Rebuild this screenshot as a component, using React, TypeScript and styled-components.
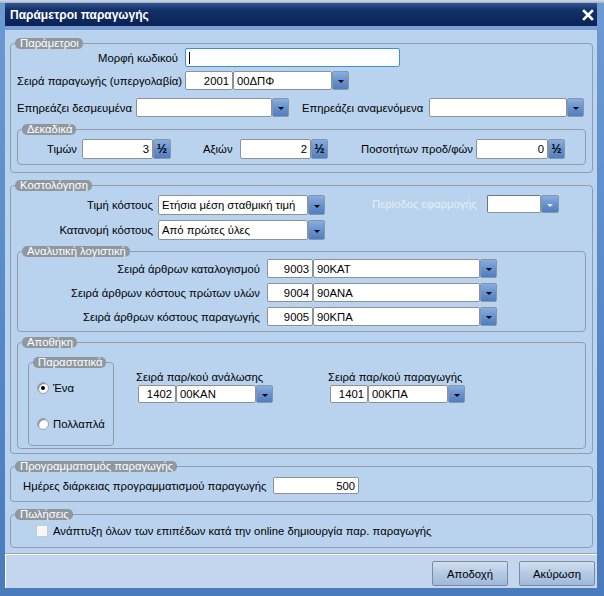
import styled, { createGlobalStyle } from 'styled-components'

const GlobalStyle = createGlobalStyle`
  html, body {
    margin: 0;
    padding: 0;
    background: #5b88c4;
  }
  body {
    font-family: "Liberation Sans", Arial, sans-serif;
    font-size: 11.3px;
    color: #000;
  }
`

const Window = styled.div`
  width: 604px;
  height: 596px;
  box-sizing: border-box;
  display: flex;
  flex-direction: column;
  padding: 0 7px 8px 5px;
  background: linear-gradient(180deg, #6d9ad3 0%, #5686c6 60%, #4a7bbd 100%);
`

const TopStrip = styled.div`
  height: 3px;
  margin: 0 -7px 0 -5px;
  background: linear-gradient(180deg, #d4dbe5, #9fb1c9);
`

const TitleBar = styled.div`
  height: 23px;
  display: flex;
  align-items: center;
  justify-content: space-between;
  padding: 0 3px 0 5px;
  background: linear-gradient(180deg, #33568e 0%, #13306a 30%, #0b2355 100%);
  color: #fff;
  font-size: 12px;
  font-weight: bold;
`

const TitleBand = styled.div`
  height: 4px;
  background: #7b9fd2;
`

const Body = styled.div`
  flex: 1;
  display: flex;
  flex-direction: column;
  gap: 7px;
  padding: 8px 4px 0 5px;
  background: #b9d3ee;
`

const Group = styled.fieldset<{ $mt?: number; $ml?: number; $w?: number }>`
  margin: ${p => p.$mt ?? 0}px 0 0 ${p => p.$ml ?? 0}px;
  padding: 0;
  ${p => (p.$w ? `width: ${p.$w}px; box-sizing: border-box; flex-shrink: 0;` : '')}
  border: 1px solid #8e9cad;
  border-radius: 4px;
  min-width: 0;
`

const Legend = styled.legend`
  margin-left: 4px;
  padding: 0 4px 0 5px;
  height: 11px;
  line-height: 11px;
  background: #8f989f;
  color: #fff;
  border-radius: 5px;
  white-space: nowrap;
`

const GroupBody = styled.div<{ $pad: string; $row?: boolean }>`
  display: flex;
  flex-direction: ${p => (p.$row ? 'row' : 'column')};
  align-items: flex-start;
  padding: ${p => p.$pad};
`

const Row = styled.div<{ $mt?: number; $ml?: number; $h?: number }>`
  display: flex;
  align-items: center;
  height: ${p => p.$h ?? 19}px;
  margin-top: ${p => p.$mt ?? 0}px;
  margin-left: ${p => p.$ml ?? 0}px;
`

const Label = styled.span<{ $w?: number; $right?: boolean; $ml?: number; $mr?: number; $off?: boolean }>`
  flex-shrink: 0;
  white-space: nowrap;
  ${p => (p.$w ? `width: ${p.$w}px;` : '')}
  text-align: ${p => (p.$right ? 'right' : 'left')};
  margin-left: ${p => p.$ml ?? 0}px;
  margin-right: ${p => p.$mr ?? 0}px;
  color: ${p => (p.$off ? '#e6edf5' : '#000')};
`

const Box = styled.div<{ $w: number; $h?: number; $right?: boolean; $focus?: boolean; $sunken?: boolean }>`
  box-sizing: border-box;
  flex-shrink: 0;
  width: ${p => p.$w}px;
  height: ${p => p.$h ?? 19}px;
  display: flex;
  align-items: center;
  justify-content: ${p => (p.$right ? 'flex-end' : 'flex-start')};
  padding: 0 3px;
  background: #fff;
  border: 1px solid ${p => (p.$focus ? '#3e8de4' : '#8b9299')};
  ${p => (p.$sunken ? 'border-top-color: #6c7580; border-left-color: #6c7580;' : '')}
  border-radius: 2px;
  white-space: nowrap;
  overflow: hidden;
`

const Caret = styled.span`
  width: 1px;
  height: 12px;
  background: #000;
`

const SideButton = styled.div<{ $w?: number; $h?: number }>`
  box-sizing: border-box;
  flex-shrink: 0;
  width: ${p => p.$w ?? 17}px;
  height: ${p => p.$h ?? 19}px;
  display: flex;
  align-items: center;
  justify-content: center;
  background: linear-gradient(180deg, #89aee0 0%, #6892cf 50%, #4f7fc0 100%);
  border: 1px solid #8a96a4;
  border-radius: 2px;
  font-size: 12px;
  font-weight: bold;
`

const Arrow = styled.span<{ $off?: boolean }>`
  width: 0;
  height: 0;
  margin-top: 2px;
  border-left: 3px solid transparent;
  border-right: 3px solid transparent;
  border-top: 3px solid ${p => (p.$off ? '#e8eef6' : '#000')};
`

const Stack = styled.div<{ $ml?: number; $mt?: number; $gap?: number }>`
  display: flex;
  flex-direction: column;
  gap: ${p => p.$gap ?? 2}px;
  margin-left: ${p => p.$ml ?? 0}px;
  margin-top: ${p => p.$mt ?? 0}px;
`

const Radio = styled.span<{ $on?: boolean }>`
  box-sizing: border-box;
  width: 12px;
  height: 12px;
  border-radius: 50%;
  background: #fff;
  border: 1px solid #9aa3ad;
  box-shadow: inset 1px 1px 1px #6d7782;
  display: flex;
  align-items: center;
  justify-content: center;
  margin-right: 4px;
  &::after {
    content: '';
    width: 4px;
    height: 4px;
    border-radius: 50%;
    background: ${p => (p.$on ? '#000' : 'transparent')};
  }
`

const Check = styled.span`
  box-sizing: border-box;
  width: 12px;
  height: 12px;
  background: #f4f6f8;
  border: 1px solid #c4ccd4;
  margin-right: 5px;
`

const Footer = styled.div`
  height: 35px;
  box-sizing: border-box;
  display: flex;
  justify-content: flex-end;
  align-items: flex-start;
  gap: 11px;
  padding: 7px 2px 0 0;
  background: #c3d6ee;
  border-top: 1px solid #9da8b5;
  box-shadow: inset 1px 1px 0 #fff;
`

const Button = styled.div`
  box-sizing: border-box;
  width: 76px;
  height: 25px;
  display: flex;
  align-items: center;
  justify-content: center;
  background: linear-gradient(180deg, #d3e0f0 0%, #b4c9e4 50%, #9fb9dc 100%);
  border: 1px solid #7d8a99;
  border-radius: 2px;
`

const Combo = ({
  num,
  numW,
  text,
  textW,
  h,
  off,
}: {
  num?: string
  numW?: number
  text?: string
  textW: number
  h?: number
  off?: boolean
}) => (
  <>
    {num !== undefined && (
      <Box $w={numW ?? 46} $h={h} $right>
        {num}
      </Box>
    )}
    <Box $w={textW} $h={h} $sunken={off}>
      {text}
    </Box>
    <SideButton $h={h} $w={off ? 18 : 17}>
      <Arrow $off={off} />
    </SideButton>
  </>
)

const Close = () => (
  <svg width="12" height="12" viewBox="0 0 12 12">
    <path d="M2 2 L10 10 M10 2 L2 10" stroke="#fff" strokeWidth="2.6" strokeLinecap="square" />
  </svg>
)

export default function App() {
  return (
    <>
      <GlobalStyle />
      <Window>
        <TopStrip />
        <TitleBar>
          <span>Παράμετροι παραγωγής</span>
          <Close />
        </TitleBar>
        <TitleBand />
        <Body>
          <Group>
            <Legend>Παράμετροι</Legend>
            <GroupBody $pad="0 6px 7px 6px" style={{ marginTop: -1 }}>
              <Row>
                <Label $w={161} $right $mr={7}>Μορφή κωδικού</Label>
                <Box $w={215} $focus>
                  <Caret />
                </Box>
              </Row>
              <Row $mt={4}>
                <Label $w={161} $right $mr={7}>Σειρά παραγωγής (υπεργολαβία)</Label>
                <Combo num="2001" numW={48} text="00ΔΠΦ" textW={99} />
              </Row>
              <Row $mt={8}>
                <Label $w={119}>Επηρεάζει δεσμευμένα</Label>
                <Combo textW={136} />
                <Label $w={127} $ml={13}>Επηρεάζει αναμενόμενα</Label>
                <Combo textW={138} />
              </Row>
              <Group $mt={7} style={{ alignSelf: 'stretch' }}>
                <Legend>Δεκαδικά</Legend>
                <GroupBody $pad="4px 0 5px 0">
                  <Row $h={20}>
                    <Label $w={59} $right $mr={5}>Τιμών</Label>
                    <Box $w={71} $h={20} $right>3</Box>
                    <SideButton $w={18} $h={20}>½</SideButton>
                    <Label $w={29} $right $ml={32} $mr={8}>Αξιών</Label>
                    <Box $w={71} $h={20} $right>2</Box>
                    <SideButton $h={20}>½</SideButton>
                    <Label $w={113} $right $ml={32} $mr={3}>Ποσοτήτων προδ/φών</Label>
                    <Box $w={72} $h={20} $right>0</Box>
                    <SideButton $h={20}>½</SideButton>
                  </Row>
                </GroupBody>
              </Group>
            </GroupBody>
          </Group>

          <Group>
            <Legend>Κοστολόγηση</Legend>
            <GroupBody $pad="4px 6px 4px 6px">
              <Row $h={45} style={{ alignItems: 'flex-start' }}>
                <Stack $gap={5}>
                  <Row $h={20}>
                    <Label $w={136} $right $mr={5}>Τιμή κόστους</Label>
                    <Combo text="Ετήσια μέση σταθμική τιμή" textW={150} h={20} />
                  </Row>
                  <Row $h={20}>
                    <Label $w={136} $right $mr={5}>Κατανομή κόστους</Label>
                    <Combo text="Από πρώτες ύλες" textW={150} h={20} />
                  </Row>
                </Stack>
                <Row $h={18} $ml={47}>
                  <Label $w={107} $mr={8} $off>Περίοδος εφαρμογής</Label>
                  <Combo textW={54} h={18} off />
                </Row>
              </Row>
              <Group $mt={6} style={{ alignSelf: 'stretch' }}>
                <Legend>Αναλυτική λογιστική</Legend>
                <GroupBody $pad="2px 0 5px 0">
                  <Row>
                    <Label $w={242} $right $mr={7}>Σειρά άρθρων καταλογισμού</Label>
                    <Combo num="9003" text="90ΚΑΤ" textW={167} />
                  </Row>
                  <Row $mt={5}>
                    <Label $w={242} $right $mr={7}>Σειρά άρθρων κόστους πρώτων υλών</Label>
                    <Combo num="9004" text="90ΑΝΑ" textW={167} />
                  </Row>
                  <Row $mt={5}>
                    <Label $w={242} $right $mr={7}>Σειρά άρθρων κόστους παραγωγής</Label>
                    <Combo num="9005" text="90ΚΠΑ" textW={167} />
                  </Row>
                </GroupBody>
              </Group>
              <Group $mt={5} style={{ alignSelf: 'stretch' }}>
                <Legend>Αποθήκη</Legend>
                <GroupBody $pad="0 0 2px 0" $row>
                  <Group $mt={9} $ml={10} $w={86}>
                    <Legend>Παραστατικά</Legend>
                    <GroupBody $pad="14px 0 15px 8px">
                      <Row $h={12}>
                        <Radio $on />
                        Ένα
                      </Row>
                      <Row $h={12} $mt={24}>
                        <Radio />
                        Πολλαπλά
                      </Row>
                    </GroupBody>
                  </Group>
                  <Stack $ml={22} $mt={23}>
                    <Label>Σειρά παρ/κού ανάλωσης</Label>
                    <Row $h={18} $ml={2}>
                      <Combo num="1402" numW={38} text="00ΚΑΝ" textW={80} h={18} />
                    </Row>
                  </Stack>
                  <Stack $ml={55} $mt={23}>
                    <Label>Σειρά παρ/κού παραγωγής</Label>
                    <Row $h={18} $ml={2}>
                      <Combo num="1401" numW={38} text="00ΚΠΑ" textW={80} h={18} />
                    </Row>
                  </Stack>
                </GroupBody>
              </Group>
            </GroupBody>
          </Group>

          <Group>
            <Legend>Προγραμματισμός παραγωγής</Legend>
            <GroupBody $pad="5px 12px 7px 12px">
              <Row $h={17}>
                <Label $w={244} $mr={6}>Ημέρες διάρκειας προγραμματισμού παραγωγής</Label>
                <Box $w={86} $h={17} $right>500</Box>
              </Row>
            </GroupBody>
          </Group>

          <Group>
            <Legend>Πωλήσεις</Legend>
            <GroupBody $pad="5px 12px 10px 25px">
              <Row $h={12}>
                <Check />
                Ανάπτυξη όλων των επιπέδων κατά την online δημιουργία παρ. παραγωγής
              </Row>
            </GroupBody>
          </Group>
        </Body>
        <Footer>
          <Button>Αποδοχή</Button>
          <Button>Ακύρωση</Button>
        </Footer>
      </Window>
    </>
  )
}
